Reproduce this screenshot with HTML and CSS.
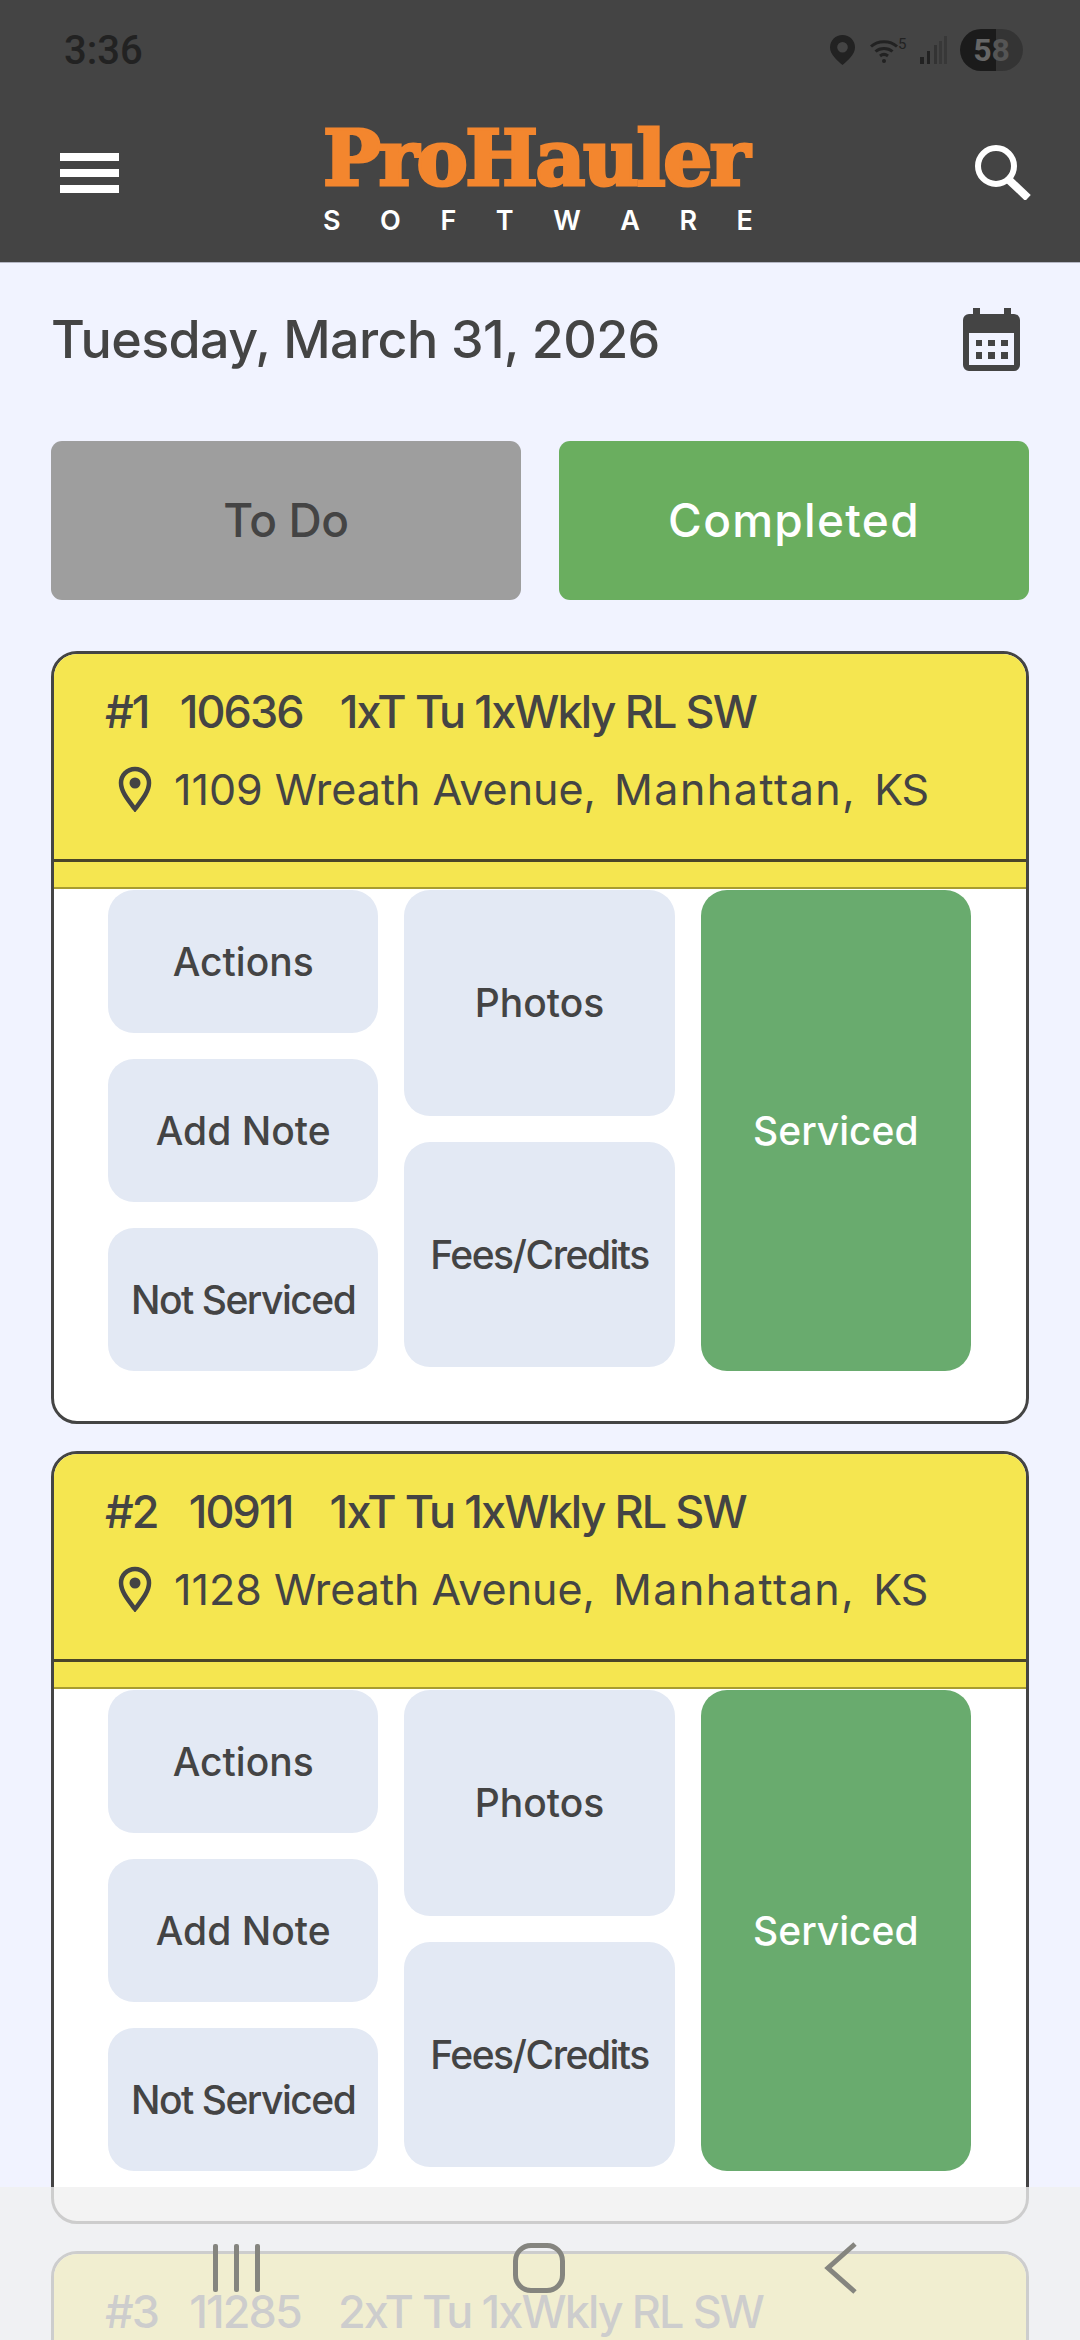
FILE: index.html
```html
<!DOCTYPE html>
<html lang="en">
<head>
    <meta charset="UTF-8">
    <meta name="viewport" content="width=device-width, initial-scale=1.0">
    <title>ProHauler Software</title>
    <link rel="stylesheet" href="styles.css">
</head>
<body>
    <header class="topbar">
        <div class="status">
            <span class="clock">3:36</span>
            <div class="status-icons">
                <svg class="st-pin" viewBox="0 0 25 30"><path fill-rule="evenodd" d="M12.500 0C5.500 0 0 5.500 0 12.300 0 19.500 7 25.500 12.500 30 18 25.500 25 19.500 25 12.300 25 5.500 19.500 0 12.500 0zM12.500 7a5.300 5.300 0 1 1 0 10.600 5.300 5.300 0 0 1 0-10.600z" fill="#222"/></svg>
                <div class="st-wifi">
                    <svg viewBox="0 0 28 26" width="28" height="26"><g fill="none" stroke="#222" stroke-width="3"><path d="M1 9.500C8 3 20 3 27 9.500"/><path d="M5.500 14.500C10 10.500 18 10.500 22.500 14.500"/><path d="M10 19C12.500 17 15.500 17 18 19"/></g><circle cx="14" cy="24" r="2" fill="#222"/></svg>
                    <span class="st-five">5</span>
                </div>
                <svg class="st-signal" viewBox="0 0 28 28"><rect x="0" y="21" width="4" height="7" fill="#222"/><rect x="7" y="15" width="3" height="13" fill="#222"/><rect x="14" y="9" width="3" height="19" fill="#333"/><rect x="24" y="0" width="3" height="28" fill="#383838"/><rect x="19" y="5" width="3" height="23" fill="#383838"/></svg>
                <div class="battery"><span class="bat-a">5</span><span class="bat-b">8</span></div>
            </div>
        </div>
        <div class="appbar">
            <div class="burger"><i></i><i></i><i></i></div>
            <div class="logo">
                <div class="logo-name">ProHauler</div>
                <div class="logo-sub"><span>S</span><span>O</span><span>F</span><span>T</span><span>W</span><span>A</span><span>R</span><span>E</span></div>
            </div>
            <svg class="search" viewBox="0 0 56 56"><circle cx="21" cy="22" r="18" fill="none" stroke="#fff" stroke-width="6"/><path d="M33 35L53 54" stroke="#fff" stroke-width="8"/></svg>
        </div>
    </header>

    <main class="content">
        <div class="date-row">
            <h1 class="date">Tuesday, March 31, 2026</h1>
            <svg class="cal" viewBox="0 0 57 63">
                <path fill-rule="evenodd" d="M10 0h7v6h24V0h7v6h3a6 6 0 0 1 6 6v45a6 6 0 0 1-6 6H6a6 6 0 0 1-6-6V12a6 6 0 0 1 6-6h4zM6 25v32h45V25z" fill="#444"/>
                <g fill="#444"><rect x="13" y="32" width="6" height="6"/><rect x="25" y="32" width="7" height="6"/><rect x="38" y="32" width="7" height="6"/><rect x="13" y="44" width="6" height="7"/><rect x="25" y="44" width="7" height="7"/><rect x="38" y="44" width="7" height="7"/></g>
            </svg>
        </div>

        <div class="tabs">
            <div class="tab tab-todo">To Do</div>
            <div class="tab tab-done">Completed</div>
        </div>

        <section class="card">
            <div class="card-head">
                <div class="route"><span>#1</span><span>10636</span><span class="plan">1xT Tu 1xWkly RL SW</span></div>
                <div class="addr">
                    <svg class="pin" viewBox="0 0 34 46"><path d="M17 3C9 3 3 9.500 3 17 3 26 11 35 17 43 23 35 31 26 31 17 31 9.500 25 3 17 3z" fill="none" stroke="#444" stroke-width="4.500"/><circle cx="17" cy="17" r="5.500" fill="#444"/></svg>
                    <span>1109 Wreath Avenue,</span><span class="city">Manhattan,</span><span class="state">KS</span>
                </div>
            </div>
            <div class="card-strip"></div>
            <div class="card-body">
                <div class="col">
                    <div class="act">Actions</div>
                    <div class="act">Add Note</div>
                    <div class="act act-tight">Not Serviced</div>
                </div>
                <div class="col col-mid">
                    <div class="act">Photos</div>
                    <div class="act act-tight">Fees/Credits</div>
                </div>
                <div class="col">
                    <div class="act act-green">Serviced</div>
                </div>
            </div>
        </section>

        <section class="card">
            <div class="card-head">
                <div class="route"><span>#2</span><span>10911</span><span class="plan">1xT Tu 1xWkly RL SW</span></div>
                <div class="addr">
                    <svg class="pin" viewBox="0 0 34 46"><path d="M17 3C9 3 3 9.500 3 17 3 26 11 35 17 43 23 35 31 26 31 17 31 9.500 25 3 17 3z" fill="none" stroke="#444" stroke-width="4.500"/><circle cx="17" cy="17" r="5.500" fill="#444"/></svg>
                    <span>1128 Wreath Avenue,</span><span class="city">Manhattan,</span><span class="state">KS</span>
                </div>
            </div>
            <div class="card-strip"></div>
            <div class="card-body">
                <div class="col">
                    <div class="act">Actions</div>
                    <div class="act">Add Note</div>
                    <div class="act act-tight">Not Serviced</div>
                </div>
                <div class="col col-mid">
                    <div class="act">Photos</div>
                    <div class="act act-tight">Fees/Credits</div>
                </div>
                <div class="col">
                    <div class="act act-green">Serviced</div>
                </div>
            </div>
        </section>

        <section class="card">
            <div class="card-head">
                <div class="route"><span>#3</span><span>11285</span><span class="plan">2xT Tu 1xWkly RL SW</span></div>
            </div>
        </section>
    </main>

    <!-- system nav bar sits over the list -->
    <nav class="sysnav">
        <div class="nav-recents"><i></i><i></i><i></i></div>
        <div class="nav-home"></div>
        <svg class="nav-back" viewBox="0 0 34 52"><path d="M31 2L4 26 31 50" fill="none" stroke="#85857f" stroke-width="5"/></svg>
    </nav>
</body>
</html>
```

FILE: styles.css
```css
* {
    box-sizing: border-box;
}
body {
    margin: 0;
    width: 1080px;
    height: 2340px;
    overflow: hidden;
    position: relative;
    background-color: #f1f3ff;
    color: #444;
    font-family: Inter, "Noto Sans", sans-serif;
}

/* header */
.topbar {
    height: 263px;
    background-color: #444;
    border-bottom: 1px solid #b5b7c4;
}
.status {
    height: 100px;
    display: flex;
    align-items: center;
    justify-content: space-between;
    padding: 0 57px 0 64px;
}
.clock {
    font-family: Roboto, sans-serif;
    font-weight: 500;
    font-size: 40px;
    color: #222;
}
.status-icons {
    display: flex;
    align-items: center;
}
.st-pin {
    width: 25px;
    height: 30px;
    margin-right: 15px;
}
.st-wifi {
    display: flex;
    align-items: flex-start;
    width: 40px;
    margin-right: 10px;
}
.st-five {
    font-family: Roboto, sans-serif;
    font-size: 15px;
    line-height: 15px;
    color: #222;
}
.st-signal {
    width: 28px;
    height: 28px;
    margin-right: 12px;
}
.battery {
    width: 63px;
    height: 42px;
    border-radius: 21px;
    display: flex;
    justify-content: center;
    align-items: center;
    background: linear-gradient(to right, #1b1b1b 57%, #343434 57%);
    font-family: Roboto, sans-serif;
    font-weight: 700;
    font-size: 32px;
}
.bat-a {
    color: #666;
}
.bat-b {
    color: #555;
}
.appbar {
    height: 162px;
    display: flex;
    align-items: center;
    justify-content: space-between;
    padding: 0 49px 0 60px;
}
.burger {
    width: 59px;
    display: flex;
    flex-direction: column;
    gap: 8px;
    margin-top: -16px;
}
.burger i {
    display: block;
    height: 8px;
    background-color: #fff;
}
.logo {
    width: 430px;
    margin-right: 18px;
    margin-bottom: 5px;
}
.logo-name {
    font-family: "DejaVu Serif", serif;
    font-weight: 700;
    font-size: 77px;
    line-height: 74px;
    letter-spacing: -2.500px;
    color: #f3862e;
    -webkit-text-stroke: 3px #f3862e;
    white-space: nowrap;
}
.logo-sub {
    display: flex;
    justify-content: space-between;
    margin-top: 11px;
    font-family: Inter, sans-serif;
    font-weight: 600;
    font-size: 27px;
    line-height: 30px;
    color: #fff;
}
.search {
    width: 56px;
    height: 56px;
    margin-top: -18px;
}

/* list */
.content {
    padding: 0 51px;
}
.date-row {
    height: 178px;
    display: flex;
    align-items: center;
    justify-content: space-between;
    padding: 0 9px 26px 0;
}
.date {
    margin: 0;
    font-size: 52px;
    font-weight: 500;
    letter-spacing: -.6px;
}
.cal {
    width: 57px;
    height: 63px;
}
.tabs {
    display: grid;
    grid-template-columns: 470px 470px;
    gap: 38px;
    margin-bottom: 51px;
}
.tab {
    height: 159px;
    padding-bottom: 2px;
    border-radius: 11px;
    display: flex;
    align-items: center;
    justify-content: center;
    font-size: 46px;
    font-weight: 500;
}
.tab-todo {
    background-color: #9e9e9e;
    letter-spacing: -.4px;
}
.tab-done {
    background-color: #6aae5f;
    color: #fff;
    letter-spacing: 1.300px;
}

.card {
    margin-bottom: 27px;
    border: 3px solid #444;
    border-radius: 26px;
    overflow: hidden;
    background-color: #fff;
}
.card-head {
    height: 208px;
    padding: 29px 0 0 51px;
    background-color: #f5e650;
    border-bottom: 3px solid #4a4528;
}
.route {
    display: flex;
    gap: 31px;
    font-size: 45px;
    font-weight: 500;
    line-height: 58px;
    letter-spacing: -1.900px;
    white-space: nowrap;
}
.plan {
    margin-left: 6px;
}
.addr {
    display: flex;
    align-items: center;
    gap: 18px;
    margin: 22px 0 0 13px;
    font-size: 43px;
    line-height: 52px;
    white-space: nowrap;
}
.addr .pin {
    margin-right: 4px;
}
.city {
    letter-spacing: 1.500px;
}
.state {
    letter-spacing: -1px;
}
.pin {
    width: 34px;
    height: 46px;
}
.card-strip {
    height: 27px;
    background-color: #f5e650;
    border-bottom: 2px solid #a89c30;
}
.card-body {
    display: flex;
    gap: 26px;
    padding: 1px 55px 50px 54px;
}
.col {
    width: 271px;
    height: 481px;
    display: flex;
    flex-direction: column;
    gap: 26px;
}
.col-mid {
    height: 477px;
}
.act {
    flex: 1;
    display: flex;
    align-items: center;
    justify-content: center;
    border-radius: 26px;
    background-color: #e3e9f4;
    font-size: 39px;
    font-weight: 500;
    white-space: nowrap;
}
.act-tight {
    letter-spacing: -1.500px;
}
.act-green {
    background-color: #69ab6e;
    color: #fff;
}

/* nav bar */
.sysnav {
    position: absolute;
    left: 0;
    right: 0;
    bottom: 0;
    height: 153px;
    background-color: rgba(240, 240, 240, .8);
}
.nav-recents {
    position: absolute;
    left: 213px;
    top: 57px;
    width: 47px;
    height: 48px;
    display: flex;
    justify-content: space-between;
}
.nav-recents i {
    width: 5px;
    background-color: #85857f;
    border-radius: 2px;
}
.nav-home {
    position: absolute;
    left: 513px;
    top: 56px;
    width: 52px;
    height: 50px;
    border: 5px solid #85857f;
    border-radius: 18px;
}
.nav-back {
    position: absolute;
    left: 824px;
    top: 55px;
    width: 34px;
    height: 52px;
}
```
